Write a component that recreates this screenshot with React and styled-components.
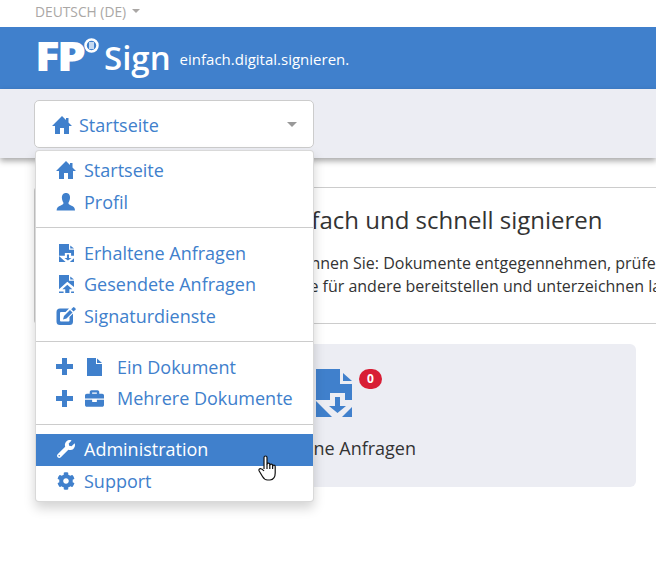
import React from "react";
import styled, { createGlobalStyle } from "styled-components";
import { FaWrench, FaCog, FaBriefcase } from "react-icons/fa";

const BLUE = "#4080cc";

const GlobalStyle = createGlobalStyle`
  html, body {
    margin: 0;
    padding: 0;
    overflow: hidden;
    background: #fff;
    font-family: "Open Sans", "Liberation Sans", sans-serif;
  }
`;

const HomeIcon = ({ size = 20 }) => (
  <svg width={size} height={size} viewBox="0 0 20 20" fill="currentColor">
    <path d="M10 1 L14 5 V3 H16.5 V7.5 L20 11 H17 V19 H12 V13 H8 V19 H3 V11 H0 Z" />
  </svg>
);

const UserIcon = () => (
  <svg width="20" height="20" viewBox="0 0 20 20" fill="currentColor">
    <path d="M10 1 C13 1 14.2 3.2 14 6 C13.9 8 13 9.8 12.4 10.8 C12.3 12 13 12.6 15 13.4 C17.6 14.4 19 15.4 19 18.5 H0.6 C0.6 15.4 2.2 14.4 4.8 13.4 C6.8 12.6 7.6 12 7.5 10.8 C6.9 9.8 6 8 5.9 6 C5.8 3.2 7 1 10 1 Z" />
  </svg>
);

const DocDownIcon = ({ width = 15, height = 18 }) => (
  <svg width={width} height={height} viewBox="0 0 36 48" preserveAspectRatio="none" fill="currentColor">
    <path d="M0 0 H24 V15 H36 V31 H29 V24 H14 V31 H0 Z" />
    <path d="M27 4 L36 12 H27 Z" />
    <path d="M19 28 H24 V37 H30 L21.5 44 L13 37 H19 Z" />
    <path d="M0 32 L16 48 H0 Z" />
    <path d="M36 38 L26 48 H36 Z" />
  </svg>
);

const DocUpIcon = ({ width = 15, height = 18 }) => (
  <svg width={width} height={height} viewBox="0 0 36 48" preserveAspectRatio="none" fill="currentColor">
    <path d="M0 0 H24 V15 H36 V32 L20 18 L0 38 Z" />
    <path d="M27 4 L36 12 H27 Z" />
    <path d="M20 26 L32 38 H25 V48 H15 V38 H8 Z" />
    <path d="M0 44 H11 V48 H0 Z" />
    <path d="M29 44 H36 V48 H29 Z" />
  </svg>
);

const EditIcon = () => (
  <svg width="20" height="20" viewBox="0 0 20 20" fill="currentColor">
    <path d="M4 2.5 H13 L9.500 6 H5 Q4 6 4 7 V14.500 Q4 15.500 5 15.500 H12.500 Q13.500 15.500 13.500 14.500 V11 L17 7.500 V15.500 Q17 19 13.500 19 H4 Q0.500 19 0.500 15.500 V6 Q0.500 2.500 4 2.500 Z" />
    <path d="M14 4 L16.500 6.500 L10.500 12.500 L7 13.500 L8 10 Z" />
    <path d="M17.500 1 Q19.800 1.500 19.800 3.500 L17.500 5.500 L15.200 3.200 Z" />
  </svg>
);

const PlusIcon = () => (
  <svg width="17" height="17" viewBox="0 0 17 17" fill="currentColor">
    <path d="M6 0 H11 V6 H17 V11 H11 V17 H6 V11 H0 V6 H6 Z" />
  </svg>
);

const FileIcon = () => (
  <svg width="15" height="18" viewBox="0 0 15 18" fill="currentColor">
    <path d="M0 0 H9 V6 H15 V18 H0 Z" />
    <path d="M10 0.500 L15 5 H10 Z" />
  </svg>
);

const HandCursor = () => (
  <svg width="20" height="26" viewBox="0 0 20 26" fill="#fff" stroke="#111" strokeWidth="1.200" strokeLinejoin="round">
    <path d="M6 14 V2.500 A1.500 1.500 0 0 1 9 2.500 V9.500 A1.400 1.400 0 0 1 11.800 9.500 V10.500 A1.400 1.400 0 0 1 14.600 10.500 V11.500 A1.300 1.300 0 0 1 17.200 11.500 V18 Q17.200 24.500 12 25 H9.500 Q6.500 25 4.500 21.500 L1.200 16 Q0.300 14 2.200 13.600 Q4 13.400 6 16" />
    <path d="M9 9.500 V14 M11.800 10.500 V14 M14.600 11.500 V14" fill="none" />
  </svg>
);

const Page = styled.div`
  position: relative;
  width: 656px;
  height: 585px;
  overflow: hidden;
`;

const LangBar = styled.div`
  height: 27px;
  box-sizing: border-box;
  padding: 0 0 5px 35px;
  display: flex;
  align-items: center;
  gap: 6px;
  font-size: 13.8px;
  color: #aaa7a5;
`;

const Caret = styled.span`
  display: inline-block;
  border-left: ${(p) => p.$size}px solid transparent;
  border-right: ${(p) => p.$size}px solid transparent;
  border-top: ${(p) => p.$size}px solid ${(p) => p.$color};
`;

const Header = styled.header`
  height: 62px;
  background: ${BLUE};
  padding-left: 35px;
  display: flex;
  align-items: flex-start;
  color: #fff;
`;

const LogoMark = styled.span`
  font-weight: 800;
  font-size: 41px;
  line-height: 56px;
  letter-spacing: -2.5px;
  transform: scaleX(1.12);
  transform-origin: left center;
  width: 49px;
  height: 56px;
`;

const LogoRing = styled.svg`
  margin: 11px 0 0 0;
`;

const LogoName = styled.span`
  font-weight: 600;
  font-size: 33px;
  line-height: 62px;
  margin-left: 5px;
`;

const Tagline = styled.span`
  font-size: 15px;
  line-height: 64px;
  margin-left: 9px;
`;

const SubBar = styled.div`
  position: relative;
  z-index: 1;
  height: 69px;
  padding: 11px 0 0 34px;
  box-sizing: border-box;
  background: #ecedf3;
  box-shadow: 0 3px 6px rgba(0, 0, 0, 0.35);
`;

const Select = styled.div`
  position: relative;
  width: 280px;
`;

const SelectButton = styled.button`
  width: 100%;
  height: 48px;
  box-sizing: border-box;
  display: flex;
  align-items: center;
  gap: 7px;
  padding: 1px 16px 0 17px;
  background: #fff;
  border: 1px solid #ccc;
  border-radius: 5px;
  color: ${BLUE};
  font: 400 18px "Open Sans", sans-serif;
`;

const SelectLabel = styled.span`
  flex: 1;
  text-align: left;
`;

const Menu = styled.div`
  position: absolute;
  top: 50px;
  left: 1px;
  width: 279px;
  box-sizing: border-box;
  padding: 4px 0;
  background: #fff;
  border: 1px solid rgba(0, 0, 0, 0.15);
  border-radius: 4px;
  box-shadow: 0 6px 12px rgba(0, 0, 0, 0.175);
`;

const MenuItem = styled.a`
  display: flex;
  align-items: center;
  height: 31.7px;
  box-sizing: border-box;
  padding: 0 0 1px 20px;
  font-size: 18px;
  color: ${(p) => (p.$active ? "#fff" : BLUE)};
  background: ${(p) => (p.$active ? BLUE : "transparent")};
`;

const IconSlot = styled.span`
  display: flex;
  align-items: center;
  justify-content: center;
  width: ${(p) => p.$width || 20}px;
  margin-right: ${(p) => p.$gap || 8}px;
  flex: none;
`;

const Divider = styled.div`
  height: 1px;
  margin: 9px 0;
  background: #ccc;
`;

const Main = styled.main`
  width: 900px;
  padding: 29px 0 0 34px;
  color: #333;
`;

const Intro = styled.section`
  height: 137px;
  box-sizing: border-box;
  padding: 15px 0 0 14px;
  border: 1px solid #ccc;
  border-right: 0;
  border-radius: 4px 0 0 4px;
`;

const IntroTitle = styled.h2`
  margin: 0 0 16px;
  font-size: 24px;
  line-height: 33px;
  font-weight: 400;
  white-space: nowrap;
`;

const IntroText = styled.p`
  margin: 0;
  font-size: 16px;
  line-height: 23px;
  white-space: nowrap;
`;

const Card = styled.section`
  width: 586px;
  height: 143px;
  box-sizing: border-box;
  margin: 20px 0 0 16px;
  padding: 25px 0 0 190px;
  background: #ecedf3;
  border-radius: 6px;
`;

const Tile = styled.div`
  width: 190px;
  display: flex;
  flex-direction: column;
  align-items: center;
  font-size: 18px;
  line-height: 24px;
`;

const TileIcon = styled.div`
  position: relative;
  display: flex;
  color: ${BLUE};
  margin: 0 2px 19px 0;
`;

const Badge = styled.span`
  position: absolute;
  top: 0;
  left: 43px;
  width: 23px;
  height: 20px;
  border-radius: 10px;
  background: #d81e35;
  color: #fff;
  font-size: 12px;
  font-weight: 700;
  line-height: 20px;
  text-align: center;
`;

const Cursor = styled.div`
  position: absolute;
  left: 258px;
  top: 455px;
  z-index: 3;
  display: flex;
`;

export default function App() {
  return (
    <Page>
      <GlobalStyle />
      <LangBar>
        DEUTSCH (DE)
        <Caret $size={4} $color="#aaa7a5" />
      </LangBar>
      <Header>
        <LogoMark>FP</LogoMark>
        <LogoRing width="15" height="15" viewBox="0 0 15 15">
          <circle cx="7.500" cy="7.500" r="6" fill="none" stroke="#fff" strokeWidth="2.500" />
          <rect x="5" y="4" width="5" height="7" fill="#fff" opacity="0.7" />
        </LogoRing>
        <LogoName>Sign</LogoName>
        <Tagline>einfach.digital.signieren.</Tagline>
      </Header>
      <SubBar>
        <Select>
          <SelectButton>
            <HomeIcon />
            <SelectLabel>Startseite</SelectLabel>
            <Caret $size={5} $color="#999" />
          </SelectButton>
          <Menu>
            <MenuItem>
              <IconSlot><HomeIcon /></IconSlot>
              Startseite
            </MenuItem>
            <MenuItem>
              <IconSlot><UserIcon /></IconSlot>
              Profil
            </MenuItem>
            <Divider />
            <MenuItem>
              <IconSlot><DocDownIcon /></IconSlot>
              Erhaltene Anfragen
            </MenuItem>
            <MenuItem>
              <IconSlot><DocUpIcon /></IconSlot>
              Gesendete Anfragen
            </MenuItem>
            <MenuItem>
              <IconSlot><EditIcon /></IconSlot>
              Signaturdienste
            </MenuItem>
            <Divider />
            <MenuItem>
              <IconSlot $width={17} $gap={12}><PlusIcon /></IconSlot>
              <IconSlot $width={19} $gap={13}><FileIcon /></IconSlot>
              Ein Dokument
            </MenuItem>
            <MenuItem>
              <IconSlot $width={17} $gap={12}><PlusIcon /></IconSlot>
              <IconSlot $width={19} $gap={13}><FaBriefcase size={19} /></IconSlot>
              Mehrere Dokumente
            </MenuItem>
            <Divider />
            <MenuItem $active>
              <IconSlot><FaWrench size={18} /></IconSlot>
              Administration
            </MenuItem>
            <MenuItem>
              <IconSlot><FaCog size={18} /></IconSlot>
              Support
            </MenuItem>
          </Menu>
        </Select>
      </SubBar>
      <Main>
        <Intro>
          <IntroTitle>Digitale Dokumente einfach und schnell signieren</IntroTitle>
          <IntroText>
            Mit dem FP Sign Portal und Web können Sie: Dokumente entgegennehmen, prüfen und signieren
            <br />
            freigeben und signieren Dokumente für andere bereitstellen und unterzeichnen lassen
          </IntroText>
        </Intro>
        <Card>
          <Tile>
            <TileIcon>
              <DocDownIcon width={36} height={48} />
              <Badge>0</Badge>
            </TileIcon>
            Erhaltene Anfragen
          </Tile>
        </Card>
      </Main>
      <Cursor>
        <HandCursor />
      </Cursor>
    </Page>
  );
}
